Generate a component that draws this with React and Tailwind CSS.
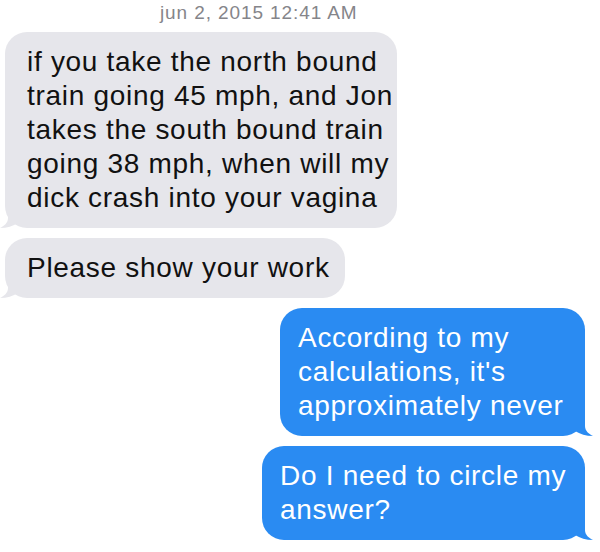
const messages = [
  {
    from: 'them',
    width: 'w-[392px]',
    lines: [
      'if you take the north bound',
      'train going 45 mph, and Jon',
      'takes the south bound train',
      'going 38 mph, when will my',
      'dick crash into your vagina',
    ],
  },
  { from: 'them', width: 'w-[340px]', lines: ['Please show your work'] },
  {
    from: 'me',
    width: 'w-[305px]',
    lines: ['According to my', "calculations, it's", 'approximately never'],
  },
  { from: 'me', width: 'w-[323px]', lines: ['Do I need to circle my', 'answer?'] },
]

const Tail = ({ side, color }) => {
  if (side === 'left') {
    return (
      <svg className="absolute left-[-5px] bottom-0" width="24" height="22" viewBox="0 0 24 22">
        <path d="M8 0 L8 12 C8 17 4 20 0 22 C7 22 13 20 18 17 L24 17 L24 0 Z" fill={color} />
      </svg>
    )
  }
  return (
    <svg className="absolute right-[-8px] bottom-0" width="26" height="22" viewBox="0 0 26 22">
      <path d="M18 0 L18 12 C18 17 22 20 26 22 C19 22 13 20 8 17 L0 17 L0 0 Z" fill={color} />
    </svg>
  )
}

const Bubble = ({ msg }) => {
  const mine = msg.from === 'me'
  const color = mine ? '#2a8bf2' : '#e6e6eb'
  return (
    <div className={`flex ${mine ? 'justify-end pr-[15px]' : 'justify-start pl-[5px]'}`}>
      <div
        className={`relative ${msg.width} rounded-[22px] py-[13px] ${mine ? 'bg-[#2a8bf2] text-white pl-[18px] pr-[10px]' : 'bg-[#e6e6eb] text-[#111] pl-[22px] pr-[10px]'}`}
      >
        <Tail side={mine ? 'right' : 'left'} color={color} />
        <div className="relative text-[28px] leading-[34px] tracking-[0.7px]">
          {msg.lines.map((line, i) => (
            <div key={i} className="whitespace-nowrap">{line}</div>
          ))}
        </div>
      </div>
    </div>
  )
}

export default function App() {
  return (
    <div className="w-[600px] h-[552px] bg-white overflow-hidden font-['Liberation_Sans',Arial,sans-serif]">
      <div className="pl-[160px] pt-[2px] h-[32px] text-[19px] leading-[22px] tracking-[0.9px] text-[#85858a]">
        jun 2, 2015 12:41 AM
      </div>
      <div className="flex flex-col gap-[10px]">
        {messages.map((m, i) => (
          <Bubble key={i} msg={m} />
        ))}
      </div>
    </div>
  )
}
